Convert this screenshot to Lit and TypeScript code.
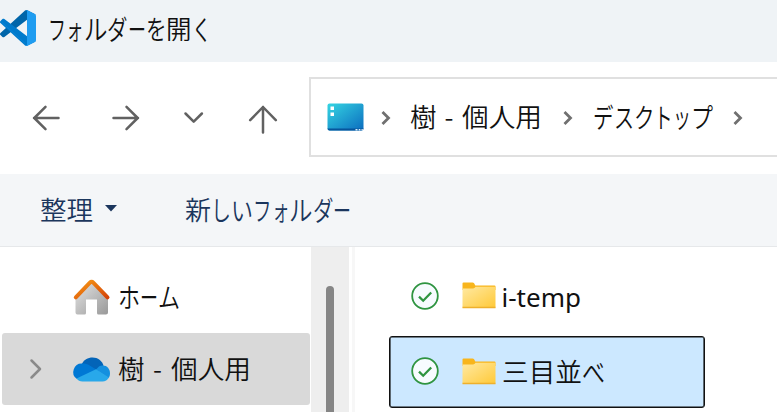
import { LitElement, html, css, svg } from "lit";
import { customElement, property } from "lit/decorators.js";

/** A run of text and the width, in pixels, that it is condensed to. */
type Run = [text: string, width: number];

const EM = 26;

@customElement("ui-label")
class UiLabel extends LitElement {
  @property({ attribute: false }) runs: Run[] = [];
  static styles = css`
    :host { display: flex; height: 38px; line-height: 38px; font-size: 26px; white-space: pre; }
    .run { display: block; flex: none; }
    .glyphs { display: inline-block; transform-origin: 0 50%; }
  `;
  render() {
    return this.runs.map(([text, width]) => {
      const dash = text === "-";
      const kana = /^[ぁ-んァ-ヶー]+$/.test(text);
      const natural = dash ? width : [...text].length * EM;
      return html`<span class="run" style="width:${width}px;${dash ? "text-align:center" : ""}"
        ><span class="glyphs" style="transform:scale(${width / natural},${kana ? 1.07 : 1})">${text}</span></span>`;
    });
  }
}

const personal: Run[] = [["樹", 26.5], ["-", 26], ["個人用", 80]];

const vscode = svg`
  <path fill="#0065a9" d="M96.46 10.8 75.86.88C73.47-.27 70.62.21 68.75 2.08L1.3 63.58c-1.81 1.66-1.81 4.51 0 6.17l5.51 5c1.49 1.35 3.72 1.45 5.32.24L93.36 13.37c2.73-2.07 6.64-.12 6.64 3.3v-.24c0-2.4-1.38-4.59-3.54-5.63z"/>
  <path fill="#007acc" d="M96.46 89.2 75.86 99.12c-2.39 1.15-5.24.67-7.11-1.2L1.3 36.42c-1.81-1.66-1.81-4.51 0-6.17l5.51-5c1.49-1.35 3.72-1.45 5.32-.24l81.23 61.62c2.73 2.07 6.64.12 6.64-3.3v.24c0 2.4-1.38 4.59-3.54 5.63z"/>
  <path fill="#1f9cf0" d="M75.86 99.13c-2.39 1.14-5.24.66-7.11-1.21C71.06 100.22 75 98.59 75 95.33V4.67c0-3.26-3.94-4.89-6.25-2.59C70.62.21 73.47-.27 75.86.87l20.6 9.91c2.16 1.04 3.54 3.23 3.54 5.63v67.18c0 2.4-1.38 4.59-3.54 5.63z"/>
  <path fill="none" stroke="#0a84d6" stroke-width="2.5" d="M4 33 70 93"/>`;

@customElement("app-root")
class AppRoot extends LitElement {
  static styles = css`
    :host {
      display: flex; flex-direction: column; width: 777px; height: 412px; overflow: hidden;
      background: #fff; color: #111;
      font-family: "Noto Sans CJK JP", sans-serif; font-weight: 350;
    }
    svg { display: block; flex: none; overflow: visible; }
    .line { fill: none; stroke: #616161; stroke-width: 2.5; stroke-linecap: round; stroke-linejoin: round; }
    .title { display: flex; box-sizing: border-box; height: 62px; padding-top: 10px; background: #eff3f6; flex: none; }
    .title ui-label { margin: -1px 0 0 12px; }
    .nav { display: flex; align-items: center; height: 112px; flex: none; }
    .back { margin-left: 32px; }
    .forward { margin-left: 52px; }
    .recent { margin-left: 44px; }
    .up { margin-left: 45px; }
    .address {
      display: flex; align-items: center; box-sizing: border-box; height: 80px; width: 480px; flex: none;
      margin: 0 0 2px 32px; padding-left: 15.5px; border: 2px solid #e0e0e0;
    }
    .address ui-label { margin-top: -2px; }
    .address .chev { stroke: #707070; stroke-width: 2.8; stroke-linecap: butt; stroke-linejoin: miter; }
    .c1 { margin: 2px 19px 0 17px; }
    .c2 { margin: 2px 20px 0 21px; }
    .c3 { margin: 2px 0 0 20px; }
    .tools {
      display: flex; align-items: center; box-sizing: border-box; height: 73px; flex: none; padding-left: 39.5px;
      background: #f4f6f8; border-bottom: 1px solid #e6e8ea; color: #1b365d;
    }
    .tools ui-label { margin-top: -2px; }
    .caret { margin: 0 68.5px 3px 12px; }
    .body { display: flex; flex: 1; min-height: 0; }
    .tree { width: 311px; flex: none; }
    .home { display: flex; align-items: center; height: 86px; padding: 14px 0 0 73px; box-sizing: border-box; }
    .drive {
      display: flex; align-items: center; box-sizing: border-box; width: 307.5px; height: 72px; margin-left: 2px;
      padding-left: 28px; background: #d9d9d9; border-radius: 3px;
    }
    .drive .line { stroke: #8a8a8a; }
    .cloud { margin: 0 0 0 32px; }
    .gap { margin: -2px 0 0 8px; }
    .home .gap { margin-left: 7.5px; }
    .scroll { width: 37.5px; flex: none; background: #eee; }
    .thumb { width: 8px; height: 140px; margin: 39px 0 0 15px; border-radius: 4px; background: #858585; }
    .split { width: 3px; margin-left: 3px; background: #f7f7f7; flex: none; }
    .files { padding: 13px 0 0 34.5px; }
    .file {
      display: flex; align-items: center; box-sizing: border-box; width: 316px; height: 72px; padding-left: 21px;
      border: 1px solid transparent; border-radius: 3px;
    }
    .file + .file { margin-top: 3.5px; }
    .file ui-label { margin-top: -2px; }
    .file svg { margin-top: -1px; }
    .selected { background: #cce8ff; border-color: #111; box-shadow: inset 0 0 0 0.6px #111; }
    .folder { margin: 0 5.5px 0 23px; }
    .latin { font: 400 26px/38px "Noto Sans", sans-serif; display: block; margin-top: 2px; }
  `;

  private chevron(cls: string) {
    return html`<svg class=${cls} width="10" height="14" viewBox="0 0 10 14"><path class="line chev" d="M1.500 1 7.500 7l-6 6"/></svg>`;
  }

  private status() {
    return html`<svg width="28" height="28" viewBox="0 0 28 28">
      <circle cx="14" cy="14" r="12.8" fill="#f7fbff" stroke="#2f9441" stroke-width="1.8"/>
      <path d="m8 14.600 4.200 4.100 8-8.200" fill="none" stroke="#2f9441" stroke-width="2.300"/>
    </svg>`;
  }

  private folder() {
    return html`<svg class="folder" width="34" height="27" viewBox="0 0 34 27">
      <defs><linearGradient id="f" x2="1" y2="1"><stop stop-color="#ffe9a2"/><stop offset="1" stop-color="#ffc937"/></linearGradient></defs>
      <path d="M.5 1.500Q.5.500 1.500.500h9q1 0 1.600.8l1.200 2.200H32.500q1 0 1 1V8H.5z" fill="#f8b51c"/>
      <path d="M.5 6.500H11q1 0 1.700-.8l.8-.9h20V25q0 1-1 1h-31q-1 0-1-1z" fill="url(#f)"/>
      <path d="M.5 25.600h33" stroke="#eeb02c" stroke-width="1.500"/>
    </svg>`;
  }

  render() {
    return html`
      <div class="title">
        <svg width="36" height="36" viewBox="0 0 100 100">${vscode}</svg>
        <ui-label .runs=${[["フ", 18], ["ォ", 17.5], ["ル", 23.5], ["ダ", 20.5], ["ー", 18], ["を", 20.5], ["開", 25.5], ["く", 19.5]] as Run[]}></ui-label>
      </div>
      <div class="nav">
        <svg class="back" width="28" height="26" viewBox="0 0 28 26"><path class="line" d="M26.500 13H2M13.500 1.800 2.300 13l11.200 11.200"/></svg>
        <svg class="forward" width="28" height="26" viewBox="0 0 28 26"><path class="line" d="M1.500 13H26M14.500 1.800 25.700 13 14.500 24.200"/></svg>
        <svg class="recent" width="20" height="12" viewBox="0 0 20 12"><path class="line" d="m1.500 1.500 8.200 8.200 8.200-8.200"/></svg>
        <svg class="up" width="28" height="28" viewBox="0 0 28 28"><path class="line" d="M14 28.500V3M1.200 16.200 14 3l12.800 13.200"/></svg>
        <div class="address">
          <svg width="37" height="28" viewBox="0 0 37 28">
            <defs>
              <linearGradient id="d" x2="1" y2="1"><stop stop-color="#35d5e2"/><stop offset="1" stop-color="#0b6cbf"/></linearGradient>
            </defs>
            <rect x=".5" y=".5" width="36" height="27" rx="2" fill="url(#d)"/>
            <path d="M.5 25.500h36q0 2-2 2h-32q-2 0-2-2z" fill="#07549b"/>
            <path d="M3.500 3.500H7V7H3.500zM3.500 9.500H7V13H3.500z" fill="#fff"/>
            <path d="M28.500 26h2v1.500h-2zM31.700 26h1.700v1.500h-1.700zM34.500 26h1.300v1.500h-1.300z" fill="#d8efff"/>
          </svg>
          ${this.chevron("c1")}
          <ui-label .runs=${personal}></ui-label>
          ${this.chevron("c2")}
          <ui-label .runs=${[["デ", 20.5], ["ス", 20], ["ク", 20.5], ["ト", 18.5], ["ッ", 18], ["プ", 22]] as Run[]}></ui-label>
          ${this.chevron("c3")}
        </div>
      </div>
      <div class="tools">
        <ui-label .runs=${[["整理", 53]] as Run[]}></ui-label>
        <svg class="caret" width="12" height="7" viewBox="0 0 12 7"><path d="M0 0h12L6 6.500z" fill="#1b365d"/></svg>
        <ui-label .runs=${[["新", 26], ["し", 20], ["い", 22], ["フ", 18.5], ["ォ", 17.5], ["ル", 23.5], ["ダ", 20.5], ["ー", 18]] as Run[]}></ui-label>
      </div>
      <div class="body">
        <div class="tree">
          <div class="home">
            <svg width="37" height="36" viewBox="0 0 37 36">
              <defs>
                <linearGradient id="w" x2="1" y2="1"><stop stop-color="#e4e4e4"/><stop offset="1" stop-color="#999"/></linearGradient>
                <linearGradient id="r" x2="1" y2="1"><stop stop-color="#f79a16"/><stop offset="1" stop-color="#d54307"/></linearGradient>
              </defs>
              <path d="M2.500 17 18.500 3l16.500 14v16.500q0 2-2 2h-7.500q-1.500 0-1.500-1.500V20.500H13V34q0 1.500-1.500 1.500h-7q-2 0-2-2z" fill="url(#w)"/>
              <path d="M2.800 18.300 16.900 3.700q1.700-1.700 3.400 0L34.500 18.300" fill="none" stroke="url(#r)" stroke-width="4" stroke-linecap="round"/>
            </svg>
            <ui-label class="gap" .runs=${[["ホ", 22], ["ー", 18], ["ム", 22]] as Run[]}></ui-label>
          </div>
          <div class="drive">
            <svg width="12" height="20" viewBox="0 0 12 20"><path class="line" d="m1.500 1.500 8.500 8.500-8.500 8.500"/></svg>
            <svg class="cloud" width="36" height="25" viewBox="0 0 36 25">
              <path d="M7.500 8C9.500 2.500 14 .5 18.500.5c5.500 0 9.500 3.500 11 8l-5.500 6z" fill="#0364b8"/>
              <path d="M3 22A8.500 8.500 0 0 1 8.500 6.500c3 0 5 .5 8 2.500L27 15.500z" fill="#0078d4"/>
              <path d="m22 12.500 3-3c1-.8 2.800-1 4-1 4 0 7 3.500 7 8 0 2-.6 3.500-1.700 4.800z" fill="#1490df"/>
              <path d="M2.500 21.500 22 12.300l12.800 8.200c-1.400 2.700-3.500 4-6.300 4H8.500c-2.700 0-4.500-1-6-3z" fill="#28a8ea"/>
            </svg>
            <ui-label class="gap" .runs=${personal}></ui-label>
          </div>
        </div>
        <div class="scroll"><div class="thumb"></div></div>
        <div class="split"></div>
        <div class="files">
          <div class="file">${this.status()}${this.folder()}<span class="latin">i-temp</span></div>
          <div class="file selected">
            ${this.status()}${this.folder()}
            <ui-label .runs=${[["三目並", 80], ["べ", 23]] as Run[]}></ui-label>
          </div>
        </div>
      </div>
    `;
  }
}
